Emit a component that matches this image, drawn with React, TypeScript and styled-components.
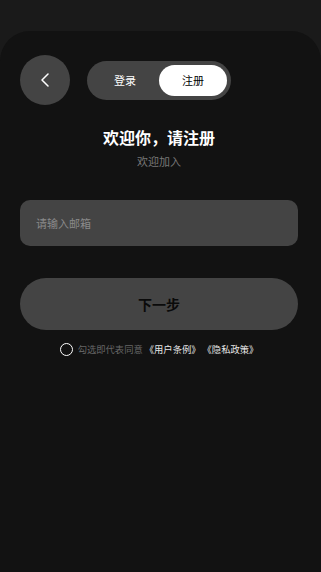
import styled, { createGlobalStyle } from 'styled-components';

const GlobalStyle = createGlobalStyle`
  html, body {
    margin: 0;
    padding: 0;
    background: #1a1a1a;
  }
  * {
    box-sizing: border-box;
  }
  body {
    font-family: 'Noto Sans CJK SC', 'Noto Sans', sans-serif;
  }
`;

const Sheet = styled.main`
  margin-top: 31px;
  min-height: 541px;
  background: #121212;
  border-radius: 30px 30px 0 0;
  padding: 24px 23px 0 20px;
  display: flex;
  flex-direction: column;
`;

const Header = styled.header`
  display: flex;
  align-items: center;
  gap: 17px;
`;

const BackButton = styled.button`
  width: 50px;
  height: 50px;
  border: none;
  border-radius: 50%;
  background: #444;
  display: flex;
  align-items: center;
  justify-content: center;
  padding: 0;
`;

const Tabs = styled.div`
  display: flex;
  padding: 4px;
  height: 39px;
  border-radius: 20px;
  background: #444;
`;

const Tab = styled.div<{ $active?: boolean }>`
  width: 68px;
  height: 31px;
  border-radius: 16px;
  display: flex;
  align-items: center;
  justify-content: center;
  font-size: 11px;
  color: ${(props) => (props.$active ? '#000' : '#fff')};
  background: ${(props) => (props.$active ? '#fff' : 'transparent')};
`;

const Title = styled.h1`
  margin: 21px 0 0 0;
  text-align: center;
  font-size: 16px;
  line-height: 22px;
  font-weight: 700;
  color: #fff;
`;

const Subtitle = styled.p`
  margin: 5px 0 0 0;
  text-align: center;
  font-size: 11px;
  line-height: 16px;
  color: #777;
`;

const EmailInput = styled.input`
  margin-top: 31px;
  height: 46px;
  width: 100%;
  border: none;
  outline: none;
  border-radius: 10px;
  background: #444;
  padding: 0 16px;
  font-family: inherit;
  font-size: 11px;
  color: #fff;
  &::placeholder {
    color: #8a8a8a;
  }
`;

const NextButton = styled.button`
  margin-top: 32px;
  height: 52px;
  width: 100%;
  border: none;
  border-radius: 26px;
  background: #444;
  font-family: inherit;
  font-size: 14px;
  font-weight: 700;
  color: #0a0a0a;
`;

const Agreement = styled.label`
  margin-top: 12px;
  display: flex;
  align-items: center;
  justify-content: center;
  gap: 2px;
  font-size: 9.3px;
  line-height: 14px;
  color: #666;
`;

const Radio = styled.span`
  width: 13px;
  height: 13px;
  border-radius: 50%;
  border: 1.3px solid #fff;
  margin-right: 3px;
`;

const Policy = styled.span`
  color: #e6e6e6;
`;

const App = () => {
  return (
    <>
      <GlobalStyle />
      <Sheet>
        <Header>
          <BackButton aria-label="返回">
            <svg width="10" height="14" viewBox="0 0 10 14" fill="none">
              <path d="M8 1L2 7l6 6" stroke="#fff" strokeWidth="1.5" strokeLinecap="round" strokeLinejoin="round" />
            </svg>
          </BackButton>
          <Tabs>
            <Tab>登录</Tab>
            <Tab $active>注册</Tab>
          </Tabs>
        </Header>
        <Title>欢迎你，请注册</Title>
        <Subtitle>欢迎加入</Subtitle>
        <EmailInput placeholder="请输入邮箱" />
        <NextButton>下一步</NextButton>
        <Agreement>
          <Radio />
          <span>勾选即代表同意</span>
          <Policy>《用户条例》</Policy>
          <Policy>《隐私政策》</Policy>
        </Agreement>
      </Sheet>
    </>
  );
};

export default App;
